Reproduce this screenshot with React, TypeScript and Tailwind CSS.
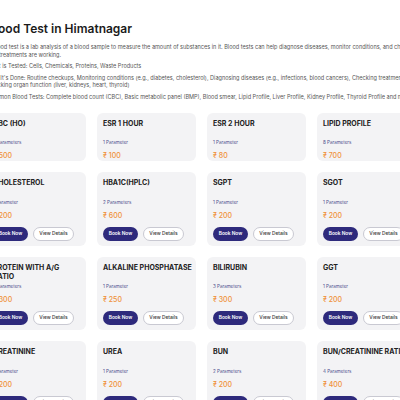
import React from 'react'

interface Test {
  name: string
  params: string
  price: string
}

const rows: Test[][] = [
  [
    { name: 'CBC (HO)', params: '2 Parameters', price: '500' },
    { name: 'ESR 1 HOUR', params: '1 Parameter', price: '100' },
    { name: 'ESR 2 HOUR', params: '1 Parameter', price: '80' },
    { name: 'LIPID PROFILE', params: '8 Parameters', price: '700' },
  ],
  [
    { name: 'CHOLESTEROL', params: '1 Parameter', price: '200' },
    { name: 'HBA1C(HPLC)', params: '2 Parameters', price: '600' },
    { name: 'SGPT', params: '1 Parameter', price: '200' },
    { name: 'SGOT', params: '1 Parameter', price: '200' },
  ],
  [
    { name: 'PROTEIN WITH A/G RATIO', params: '2 Parameters', price: '300' },
    { name: 'ALKALINE PHOSPHATASE', params: '1 Parameter', price: '250' },
    { name: 'BILIRUBIN', params: '3 Parameters', price: '300' },
    { name: 'GGT', params: '1 Parameter', price: '200' },
  ],
  [
    { name: 'CREATININE', params: '1 Parameter', price: '200' },
    { name: 'UREA', params: '1 Parameter', price: '200' },
    { name: 'BUN', params: '2 Parameters', price: '200' },
    { name: 'BUN/CREATININE RATIO', params: '4 Parameters', price: '400' },
  ],
]

function TestCard({ test, buttons }: { test: Test; buttons: boolean }) {
  return (
    <div className={`bg-[#f3f3f5] rounded-[6px] px-[6px] pt-[6px] ${buttons ? 'pb-[5px]' : 'pb-0'}`}>
      <h3 className="min-h-[18px] text-[7px] leading-[9px] font-bold text-[#222] whitespace-nowrap">
        {test.name === 'PROTEIN WITH A/G RATIO' ? (
          <>PROTEIN WITH A/G<br />RATIO</>
        ) : (
          test.name
        )}
      </h3>
      <p className="mt-[2.5px] text-[4.5px] leading-[7px] text-[#4b4b8c]">{test.params}</p>
      <p className="mt-[5px] text-[7px] leading-[10px] font-medium text-[#f0923a]">₹ {test.price}</p>
      {buttons && (
        <div className="mt-[6px] flex gap-[5px]">
          <button className="h-[14px] w-[35px] rounded-full bg-[#2e2a7c] text-white text-[4.8px] font-semibold">
            Book Now
          </button>
          <button className="h-[14px] w-[41px] rounded-full bg-white border border-[#c9c9d2] text-[#333] text-[4.8px] font-medium">
            View Details
          </button>
        </div>
      )}
    </div>
  )
}

export default function App() {
  return (
    <div className="w-[400px] h-[400px] overflow-hidden bg-white font-['Inter',sans-serif]">
      <div className="ml-[-13px] w-[429px] pt-[20px]">
        {/* Intro */}
        <h1 className="text-[12px] leading-[18px] font-semibold text-[#1b1b1b] whitespace-nowrap">
          Blood Test in Himatnagar
        </h1>
        <div className="mt-[6px] text-[5.55px] leading-[7.5px] text-[#555] space-y-[4px] whitespace-nowrap">
          <p>
            A blood test is a lab analysis of a blood sample to measure the amount of substances in it. Blood tests can help diagnose diseases, monitor conditions, and check how
            <br />
            well treatments are working.
          </p>
          <p>What is Tested: Cells, Chemicals, Proteins, Waste Products</p>
          <p>
            Why It's Done: Routine checkups, Monitoring conditions (e.g., diabetes, cholesterol), Diagnosing diseases (e.g., infections, blood cancers), Checking treatment effectiveness,
            <br />
            Checking organ function (liver, kidneys, heart, thyroid)
          </p>
          <p>
            Common Blood Tests: Complete blood count (CBC), Basic metabolic panel (BMP), Blood smear, Lipid Profile, Liver Profile, Kidney Profile, Thyroid Profile and more
          </p>
        </div>

        {/* Cards */}
        <div className="mt-[11.5px] grid grid-cols-[repeat(4,99px)] gap-x-[11px] gap-y-[11px]">
          {rows.map((row, ri) =>
            row.map((test) => <TestCard key={test.name} test={test} buttons={ri > 0} />)
          )}
        </div>
      </div>
    </div>
  )
}
